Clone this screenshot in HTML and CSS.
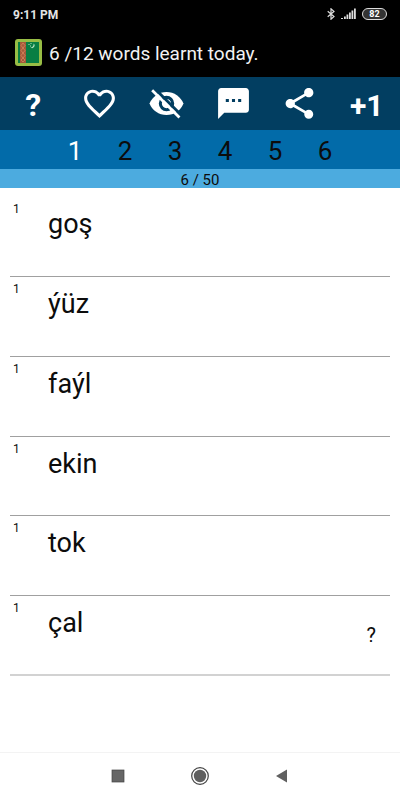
FILE: index.html
```html
<!DOCTYPE html>
<html lang="en">
<head>
<meta charset="utf-8">
<meta name="viewport" content="width=device-width, initial-scale=1">
<title>Words</title>
<link rel="stylesheet" href="styles.css">
</head>
<body>
<div class="status">
  <span class="time">9:11 PM</span>
  <div class="status-icons">
    <svg width="8" height="12" viewBox="0 0 8 12" fill="none" stroke="#ddd" stroke-width="1.2"><path d="M.7 3.2 7 8.5 4 11.2V.8L7 3.5.7 8.8"/></svg>
    <svg width="15" height="12" viewBox="0 0 15 12" fill="#ddd"><path d="M0 10h2v1H0zM3 8.500h1.800V11H3zM5.500 6.500h1.800V11H5.500zM8 4.500h1.800V11H8zM10.500 2.500h1.800V11h-1.800zM13 .500h1.800V11H13z"/></svg>
    <span class="battery">82</span>
  </div>
</div>
<header class="title">
  <svg width="27" height="27" viewBox="0 0 27 27">
    <rect width="27" height="27" rx="3" fill="#98bd45"/>
    <rect x="3" y="3" width="21" height="21" fill="#087e43"/>
    <rect x="5" y="3" width="6" height="21" fill="#a65a3b"/>
    <path d="M8 4l2 2.500-2 2.500-2-2.500zM8 9l2 2.500L8 14l-2-2.500zM8 14l2 2.500L8 19l-2-2.500zM8 19l2 2-2 2-2-2z" fill="none" stroke="#d7865c" stroke-width=".8"/>
    <path d="M18.500 4.500a2.500 2.500 0 1 1-3 4 3.200 3.200 0 0 0 3-4z" fill="#b5e3c2"/>
    <path d="M13.500 5h1v1h-1zM15.500 4h1v1h-1zM15 6.500h1v1h-1z" fill="#b5e3c2"/>
  </svg>
  <h1>6 /12 words learnt today.</h1>
</header>
<nav class="toolbar">
  <button class="help" aria-label="Help">?</button>
  <button aria-label="Favourite"><svg class="icon" viewBox="0 0 24 24"><path d="M16.500 3c-1.740 0-3.410.810-4.500 2.090C10.910 3.810 9.240 3 7.500 3 4.420 3 2 5.420 2 8.500c0 3.780 3.400 6.860 8.550 11.540L12 21.350l1.450-1.320C18.600 15.360 22 12.280 22 8.500 22 5.420 19.580 3 16.500 3zm-4.400 15.550l-.1.100-.1-.1C7.140 14.240 4 11.390 4 8.500 4 6.500 5.500 5 7.500 5c1.540 0 3.040.990 3.570 2.360h1.870C13.460 5.990 14.960 5 16.500 5c2 0 3.500 1.500 3.500 3.500 0 2.890-3.140 5.740-7.900 10.050z"/></svg></button>
  <button aria-label="Hide translation"><svg class="icon" viewBox="0 0 24 24"><path d="M12 4.500C7 4.500 2.730 7.610 1 12c1.730 4.390 6 7.500 11 7.500s9.270-3.110 11-7.500C21.270 7.610 17 4.500 12 4.500z"/><circle class="iris" cx="12" cy="12" r="4"/><path class="gap" d="M3.800 1.800 21.800 19.800"/><path class="slash" d="M2.700 3.400 20.400 21.100"/></svg></button>
  <button aria-label="Comment"><svg class="icon" viewBox="0 0 24 24"><path d="M20 2H4c-1.100 0-1.990.900-1.990 2L2 22l4-4h14c1.100 0 2-.900 2-2V4c0-1.100-.900-2-2-2zM9 11H7V9h2v2zm4 0h-2V9h2v2zm4 0h-2V9h2v2z"/></svg></button>
  <button aria-label="Share"><svg class="icon" viewBox="0 0 24 24"><path d="M18 16.080c-.760 0-1.440.300-1.960.770L8.910 12.700c.050-.230.090-.460.090-.700s-.040-.470-.090-.700l7.050-4.110c.540.500 1.250.810 2.040.810 1.660 0 3-1.340 3-3s-1.340-3-3-3-3 1.340-3 3c0 .240.040.470.090.700L8.040 9.810C7.500 9.310 6.790 9 6 9c-1.660 0-3 1.340-3 3s1.340 3 3 3c.790 0 1.500-.310 2.040-.810l7.120 4.160c-.050.210-.080.430-.080.650 0 1.610 1.310 2.920 2.920 2.920s2.920-1.310 2.920-2.920-1.310-2.920-2.920-2.920z"/></svg></button>
  <button class="plus">+1</button>
</nav>
<nav class="levels">
  <button class="current">1</button><button>2</button><button>3</button><button>4</button><button>5</button><button>6</button>
</nav>
<div class="progress">6 / 50</div>
<main>
  <ul class="words">
    <li><span class="count">1</span><span class="word">goş</span></li>
    <li><span class="count">1</span><span class="word">ýüz</span></li>
    <li><span class="count">1</span><span class="word">faýl</span></li>
    <li><span class="count">1</span><span class="word">ekin</span></li>
    <li><span class="count">1</span><span class="word">tok</span></li>
    <li><span class="count">1</span><span class="word">çal</span><button class="reveal" aria-label="Show answer">?</button></li>
  </ul>
</main>
<nav class="system">
  <button aria-label="Recent apps"><svg width="20" height="20" viewBox="0 0 20 20"><rect x="4" y="4" width="12" height="12" fill="#666" stroke="#444" stroke-width=".7"/></svg></button>
  <button aria-label="Home"><svg width="20" height="20" viewBox="0 0 20 20"><circle cx="10" cy="10" r="8.300" fill="none" stroke="#444" stroke-width="1.200"/><circle cx="10" cy="10" r="6.200" fill="#606060"/></svg></button>
  <button aria-label="Back"><svg width="20" height="20" viewBox="0 0 20 20"><path d="M4 10 15 3.500v13z" fill="#606060"/></svg></button>
</nav>
</body>
</html>
```
FILE: styles.css
```css
* { box-sizing: border-box; }

body {
  margin: 0;
  min-height: 100vh;
  display: flex;
  flex-direction: column;
  background: #fff;
  color: #0c0c0c;
  font-family: Roboto, "Liberation Sans", sans-serif;
}

button {
  margin: 0;
  padding: 0;
  border: 0;
  background: none;
  color: inherit;
  font: inherit;
  cursor: pointer;
}

svg { display: block; }

.status {
  display: flex;
  justify-content: space-between;
  align-items: center;
  height: 28px;
  padding: 0 13px;
  background: #000;
  color: #e4e4e4;
}

.time {
  padding-top: 1px;
  font-size: 12px;
  font-weight: 700;
}

.status-icons {
  display: flex;
  align-items: center;
  gap: 6px;
}

.battery {
  width: 25px;
  height: 12px;
  border: 1px solid #ddd;
  border-radius: 6px;
  background: #333;
  color: #fff;
  font-size: 9px;
  font-weight: 700;
  line-height: 11px;
  text-align: center;
}

.title {
  display: flex;
  align-items: center;
  gap: 7px;
  height: 49px;
  padding: 0 15px;
  background: #000;
  color: #f2f2f2;
}

.title h1 {
  margin: 0;
  padding-top: 1px;
  font-size: 19px;
  font-weight: 400;
}

.toolbar {
  display: grid;
  grid-template-columns: repeat(6, 1fr);
  height: 53px;
  background: #023e61;
  color: #fff;
}

.toolbar button {
  display: flex;
  align-items: center;
  justify-content: center;
}

.toolbar .help,
.toolbar .plus {
  padding-top: 3px;
  font-size: 32px;
  font-weight: 700;
}

.toolbar .plus { font-size: 30px; }

.icon {
  width: 37px;
  height: 37px;
  fill: #fff;
}

.iris {
  fill: none;
  stroke: #023e61;
  stroke-width: 2;
}

.gap {
  stroke: #023e61;
  stroke-width: 2;
}

.slash {
  stroke: #fff;
  stroke-width: 1.8;
}

.levels {
  display: flex;
  justify-content: center;
  height: 39px;
  background: #026ba9;
  font-size: 26px;
}

.levels button {
  width: 50px;
  padding-top: 2px;
}

.levels .current { color: #fff; }

.progress {
  height: 19px;
  background: #4cabdf;
  font-size: 15px;
  line-height: 22px;
  text-align: center;
}

main {
  flex: 1;
  display: flex;
  padding: 9px 10px 76px;
}

.words {
  flex: 1;
  display: grid;
  grid-auto-rows: 1fr;
  margin: 0;
  padding: 0;
  list-style: none;
}

.words li {
  display: flex;
  align-items: flex-start;
  border-bottom: 1px solid #a0a0a0;
}

.words li:last-child { border-bottom: 2px solid #d2d2d2; }

.count {
  width: 38px;
  padding: 4px 0 0 3px;
  font-size: 12px;
  line-height: 16px;
}

.word {
  flex: 1;
  padding-top: 11px;
  font-size: 27px;
  line-height: 32px;
}

.reveal {
  align-self: center;
  padding-right: 14px;
  font-size: 20px;
}

.system {
  display: flex;
  justify-content: center;
  gap: 62px;
  height: 48px;
  padding-bottom: 2px;
  border-top: 1px solid #f3f3f3;
}
```
